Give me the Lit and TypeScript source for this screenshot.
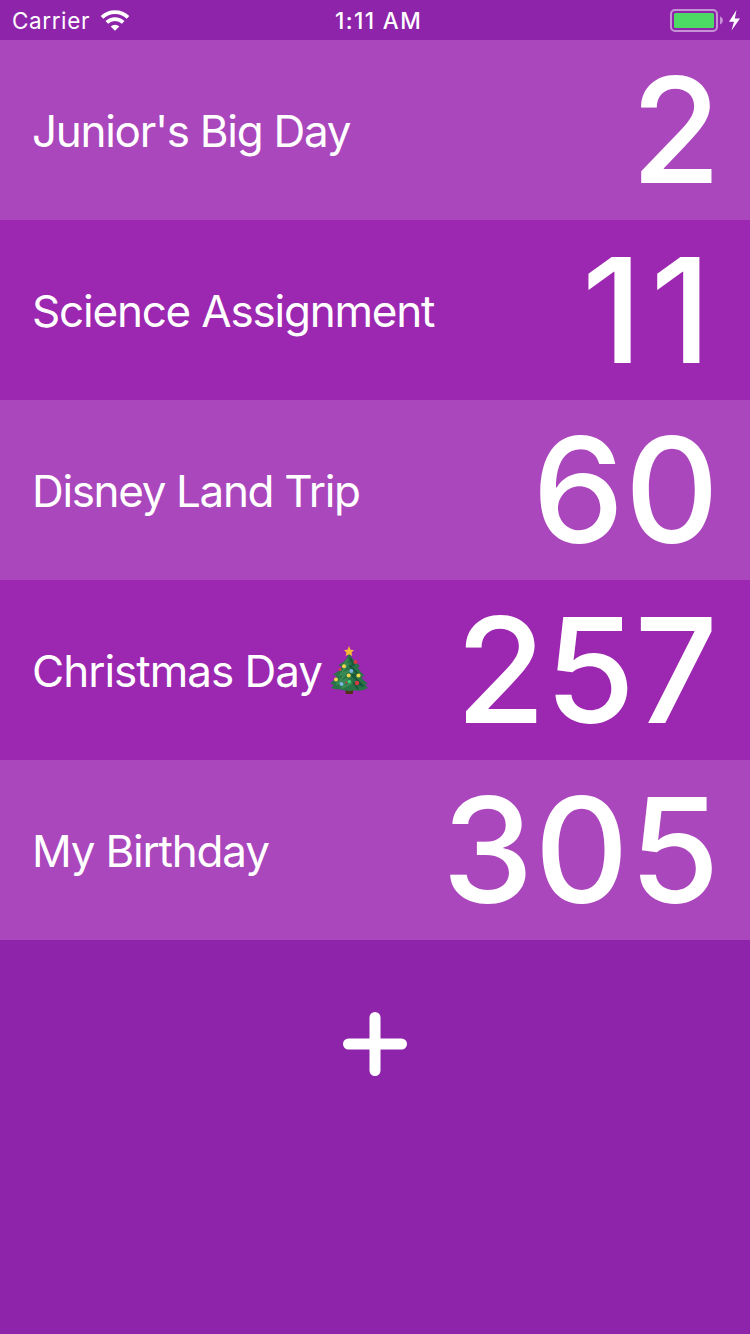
import { LitElement, html, css } from "lit";
import { customElement } from "lit/decorators.js";

interface Countdown {
  title: string;
  days: number;
  titleTracking: number;
  daysTracking: number;
  inset: number;
  tree?: boolean;
}

const events: Countdown[] = [
  { title: "Junior's Big Day", days: 2, titleTracking: -1.3, daysTracking: 0, inset: 29 },
  { title: "Science Assignment", days: 11, titleTracking: -1.2, daysTracking: 8, inset: 31 },
  { title: "Disney Land Trip", days: 60, titleTracking: -1.35, daysTracking: 0.5, inset: 30.5 },
  { title: "Christmas Day", days: 257, titleTracking: -1, daysTracking: -0.8, inset: 33, tree: true },
  { title: "My Birthday", days: 305, titleTracking: -1.2, daysTracking: 0.8, inset: 29.5 },
];

const wifi = html`<svg class="wifi" width="30" height="22" viewBox="0 0 30 22">
  <g fill="none" stroke="#fff" stroke-width="3.7">
    <path d="M2 7.4A18.6 18.6 0 0 1 28 7.4" />
    <path d="M6.8 12.4A11.7 11.7 0 0 1 23.2 12.4" />
  </g>
  <path fill="#fff" d="M15 20.8L10.7 16.5A6.1 6.1 0 0 1 19.3 16.5Z" />
</svg>`;

const battery = html`<svg class="battery" width="72" height="26" viewBox="0 0 72 26">
  <rect x="1" y="3" width="46" height="21" rx="4" fill="none" stroke="#fff" stroke-opacity=".5" stroke-width="2" />
  <rect x="4" y="6" width="40" height="15" rx="1.5" fill="#4cd964" />
  <path d="M50 9.3Q53 10.8 53 13.4T50 17.6Z" fill="#fff" fill-opacity=".5" />
  <path d="M66.5 3L59 14.8H64L61.5 23.5L70 11.5H64.8Z" fill="#fff" />
</svg>`;

const tree = html`<svg class="tree" width="40" height="50" viewBox="0 0 40 50">
  <rect x="15.500" y="40" width="7.500" height="8" rx="1" fill="#562c1b" />
  <path d="M19 6C18 12 14.500 16 8.500 19L12 21C9 25 6 27 3 28.500L7 30.500C4 34 2 36 0 37.500L4 39L1 42C6 44 10 43 12 44C17 45.500 22 45 26 44.500C30 45.500 34 44 38 42L35 38.500L38 37.500C34 35 32 33 31.500 30.500L35 30C32 27 29 25 28 21L30 20C25 16 21 12 19 6Z" fill="#287348" />
  <path d="M18 13L13 20L18 18L10 29L18 25L7 38L17 33L12 42L22 37" fill="none" stroke="#398a54" stroke-width="2" stroke-linejoin="round" />
  <path d="M20 12L24 19L20 20L29 29L22 29L33 40L24 37L28 43" fill="none" stroke="#17563a" stroke-width="1.800" stroke-linejoin="round" />
  <path d="M19 0L20.500 3.700L24 4L21.500 6.500L22.300 10L19 8.200L15.700 10L16.500 6.500L14 4L17.500 3.700Z" fill="#f7bd36" />
  <g fill="#d63b43">
    <circle cx="25.500" cy="16" r="2" /><circle cx="10" cy="23.500" r="1.500" />
    <circle cx="27" cy="37" r="2.200" /><circle cx="16.500" cy="36.500" r="1.100" />
  </g>
  <g fill="#f3d44c">
    <circle cx="14" cy="20.300" r="2" /><circle cx="28.500" cy="29.500" r="2.100" />
    <circle cx="18.700" cy="29.500" r="2" /><circle cx="6" cy="33.500" r="2" />
  </g>
  <g fill="#79b4e2"><circle cx="21.300" cy="25" r="2" /><circle cx="11.500" cy="38" r="2" /></g>
  <circle cx="19.300" cy="35.600" r="1.900" fill="#3cc775" />
</svg>`;

@customElement("app-root")
export class AppRoot extends LitElement {
  static styles = css`
    :host {
      display: block;
      height: 1334px;
      overflow: hidden;
      background: #8e24aa;
      color: #fff;
      font-family: Inter, "Liberation Sans", sans-serif;
    }
    svg { display: block; flex: none; }
    .bar {
      display: grid;
      grid-template-columns: 1fr auto 1fr;
      align-items: center;
      height: 40px;
      box-sizing: border-box;
      padding: 0 8px 0 12px;
      font-size: 22.5px;
      line-height: 38px;
    }
    .network { display: flex; align-items: center; gap: 10px; }
    .carrier { letter-spacing: 0.6px; padding-top: 1px; }
    .wifi { margin-top: 1px; }
    .time { font-weight: 550; font-size: 22.5px; letter-spacing: 1.4px; padding: 2px 0 0 3px; }
    .battery { justify-self: end; }
    .row {
      display: flex;
      align-items: center;
      justify-content: space-between;
      height: 180px;
      box-sizing: border-box;
      padding-left: 32px;
      background: #ab47bc;
    }
    .row:nth-child(even) { background: #9c27b0; }
    .label { display: flex; align-items: center; gap: 8px; }
    .title { font-size: 44px; line-height: 60px; white-space: nowrap; padding-top: 2px; }
    .tree { margin-top: 2px; }
    .days { font-size: 146px; font-weight: 500; line-height: 180px; }
    .add { display: flex; justify-content: center; padding-top: 72px; }
  `;

  render() {
    return html`
      <header class="bar">
        <div class="network"><span class="carrier">Carrier</span>${wifi}</div>
        <span class="time">1:11 AM</span>
        ${battery}
      </header>
      <main>
        ${events.map(
          (e) => html`<div class="row">
            <div class="label">
              <span class="title" style="letter-spacing:${e.titleTracking}px">${e.title}</span>
              ${e.tree ? tree : null}
            </div>
            <span class="days" style="letter-spacing:${e.daysTracking}px;padding-right:${e.inset}px">${e.days}</span>
          </div>`
        )}
      </main>
      <div class="add">
        <svg width="64" height="64" viewBox="0 0 64 64">
          <path d="M32 5.500V58.500M5.500 32H58.500" stroke="#fff" stroke-width="11" stroke-linecap="round" />
        </svg>
      </div>
    `;
  }
}
